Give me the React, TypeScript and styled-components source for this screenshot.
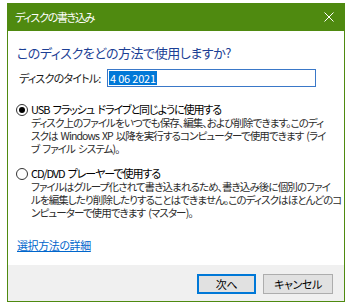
import React from 'react';
import styled, { createGlobalStyle } from 'styled-components';

const GlobalStyle = createGlobalStyle`
  html, body {
    margin: 0;
    padding: 0;
    background: #ffffff;
  }
  body {
    font-family: "Noto Sans CJK JP", "Noto Sans", sans-serif;
    font-feature-settings: "palt";
  }
`;

const Page = styled.div`
  width: 353px;
  height: 308px;
  padding: 3px 0 0 7px;
  box-sizing: border-box;
`;

const Window = styled.div`
  width: 338px;
  height: 299px;
  box-sizing: border-box;
  border: 1px solid #4f8a10;
  border-top: none;
  display: flex;
  flex-direction: column;
  background: #ffffff;
  overflow: hidden;
`;

const TitleBar = styled.div`
  height: 28px;
  background: #4f8a10;
  display: flex;
  align-items: center;
  justify-content: space-between;
  padding: 0 8px 0 7px;
  color: #ffffff;
  font-size: 11px;
  letter-spacing: -1.3px;
`;

const CloseButton = styled.svg`
  width: 10px;
  height: 10px;
  margin-right: 2px;
`;

const Content = styled.div`
  flex: 1;
  padding: 12px 9px 0 9px;
  display: flex;
  flex-direction: column;
`;

const Heading = styled.div`
  font-size: 13px;
  line-height: 20px;
  color: #1c3f95;
  letter-spacing: -0.45px;
  white-space: nowrap;
`;

const TitleRow = styled.div`
  display: flex;
  align-items: center;
  margin-top: 6px;
  padding-left: 2px;
`;

const FieldLabel = styled.label`
  width: 88px;
  font-size: 11px;
  color: #1a1a1a;
  letter-spacing: -0.8px;
`;

const TextBox = styled.div`
  width: 209px;
  height: 18px;
  box-sizing: border-box;
  border: 1px solid #3a78c8;
  padding: 1px 0 1px 1px;
  display: flex;
  align-items: stretch;
`;

const Selected = styled.span`
  background: #0078d7;
  color: #ffffff;
  font-size: 11px;
  line-height: 14px;
  padding: 0 1px;
  letter-spacing: -0.2px;
`;

const Option = styled.div<{ $gap: number }>`
  display: grid;
  grid-template-columns: 15px 1fr;
  margin-top: ${({ $gap }) => $gap}px;
  margin-left: -1px;
`;

const RadioCircle = styled.span<{ $checked?: boolean }>`
  width: 12px;
  height: 12px;
  box-sizing: border-box;
  border: 1px solid #333333;
  border-radius: 50%;
  margin-top: 1px;
  display: flex;
  align-items: center;
  justify-content: center;

  &::after {
    content: '';
    width: 6px;
    height: 6px;
    border-radius: 50%;
    background: ${({ $checked }) => ($checked ? '#000000' : 'transparent')};
  }
`;

const OptionLabel = styled.div`
  font-size: 11px;
  line-height: 13px;
  color: #000000;
  letter-spacing: -1.1px;
  word-spacing: 2px;
  white-space: nowrap;
`;

const Description = styled.div`
  grid-column: 2;
  font-size: 10.5px;
  line-height: 13px;
  color: #2b2b2b;
  letter-spacing: -0.9px;
  word-spacing: 1.5px;
`;

const Line = styled.div`
  white-space: nowrap;
`;

const Link = styled.a`
  margin-top: 20px;
  font-size: 11px;
  line-height: 13px;
  color: #0066cc;
  text-decoration: underline;
  letter-spacing: -0.4px;
  align-self: flex-start;
`;

const Footer = styled.div`
  height: 36px;
  background: #f0f0f0;
  display: flex;
  justify-content: flex-end;
  align-items: flex-start;
  gap: 7px;
  padding: 9px 11px 0 0;
  box-sizing: border-box;
`;

const Button = styled.button<{ $primary?: boolean; $width: number }>`
  width: ${({ $width }) => $width}px;
  height: 20px;
  box-sizing: border-box;
  background: #e1e1e1;
  border: ${({ $primary }) => ($primary ? '2px solid #0078d7' : '1px solid #adadad')};
  font-family: inherit;
  font-feature-settings: "palt";
  font-size: 11px;
  color: #000000;
  padding: 0;
  letter-spacing: -0.4px;
`;

const usbLines = [
  'ディスク上のファイルをいつでも保存、編集、および削除できます。このディ',
  'スクは Windows XP 以降を実行するコンピューターで使用できます (ライ',
  'ブ ファイル システム)。',
];

const cdLines = [
  'ファイルはグループ化されて書き込まれるため、書き込み後に個別のファイ',
  'ルを編集したり削除したりすることはできません。このディスクはほとんどのコ',
  'ンピューターで使用できます (マスター)。',
];

const App: React.FC = () => {
  return (
    <>
      <GlobalStyle />
      <Page>
        <Window>
          <TitleBar>
            <span>ディスクの書き込み</span>
            <CloseButton viewBox="0 0 10 10">
              <path d="M0.5 0.5 L9.5 9.5 M9.5 0.5 L0.5 9.5" stroke="#ffffff" strokeWidth="1" />
            </CloseButton>
          </TitleBar>
          <Content>
            <Heading>このディスクをどの方法で使用しますか?</Heading>
            <TitleRow>
              <FieldLabel>ディスクのタイトル:</FieldLabel>
              <TextBox>
                <Selected>4 06 2021</Selected>
              </TextBox>
            </TitleRow>

            <Option $gap={16}>
              <RadioCircle $checked />
              <OptionLabel>USB フラッシュ ドライブと同じように使用する</OptionLabel>
              <Description>
                {usbLines.map(line => (
                  <Line key={line}>{line}</Line>
                ))}
              </Description>
            </Option>

            <Option $gap={12}>
              <RadioCircle />
              <OptionLabel>CD/DVD プレーヤーで使用する</OptionLabel>
              <Description>
                {cdLines.map(line => (
                  <Line key={line}>{line}</Line>
                ))}
              </Description>
            </Option>

            <Link href="#">選択方法の詳細</Link>
          </Content>
          <Footer>
            <Button $primary $width={59}>次へ</Button>
            <Button $width={70}>キャンセル</Button>
          </Footer>
        </Window>
      </Page>
    </>
  );
};

export default App;
